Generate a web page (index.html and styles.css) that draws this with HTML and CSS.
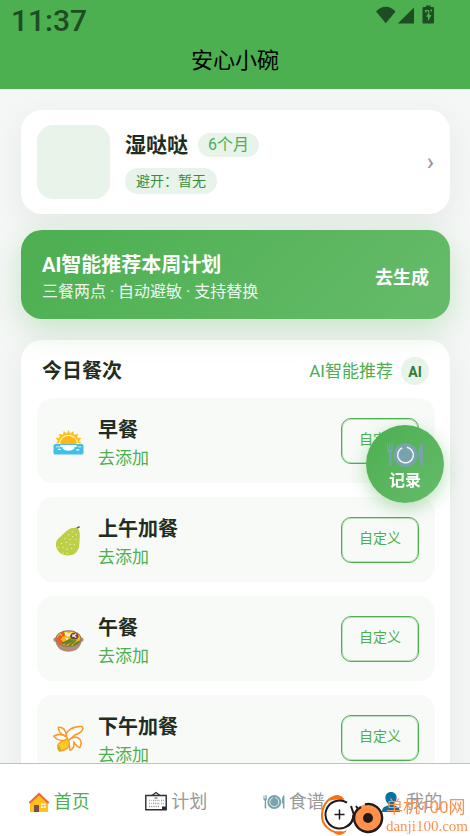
FILE: index.html
```html
<!DOCTYPE html>
<html lang="zh-CN">
<head>
<meta charset="utf-8">
<meta name="viewport" content="width=device-width, initial-scale=1">
<title>安心小碗</title>
<link rel="stylesheet" href="styles.css">
</head>
<body>
<svg class="sprite" aria-hidden="true">
  <symbol id="plate" viewBox="0 0 38 26">
    <g fill="#78a3ad">
      <circle cx="19.500" cy="13" r="12"/>
      <path d="M1 2c0-1 1-1 1 0v5h1V1.500c0-1 1.400-1 1.400 0V7h1V2c0-1 1.400-1 1.300 0v6c0 1.500-.6 2.300-1.400 2.800l.4 12c0 2-3 2-3 0l.4-12C1.300 10.300.8 9.500.8 8z"/>
      <path d="M37 1.500v21.800c0 1.800-2.600 1.800-2.600 0v-7.500h-1.800C32.300 8 33.500 1 37 1.500z"/>
    </g>
    <circle cx="19.500" cy="13" r="7.800" fill="none" stroke="#fff" stroke-width="1.500" stroke-dasharray="44 5" transform="rotate(-80 19.500 13)" opacity=".9"/>
  </symbol>
</svg>
<header class="top">
  <div class="status">
    <span class="clock">11:37</span>
    <svg class="signals" viewBox="0 0 60 20" aria-hidden="true">
      <path d="M0 6.500C5.500.2 14 .2 19.500 6.500L9.800 18.200z"/>
      <path d="M38 2.500v16H21.800z"/>
      <path fill-rule="evenodd" d="M50 2V.6h4.500V2h2.200c.8 0 1.300.5 1.300 1.300v13.900c0 .8-.5 1.300-1.300 1.300h-8.900c-.8 0-1.300-.5-1.300-1.300V3.300c0-.8.5-1.300 1.300-1.300zM49 5v2.500h1.500V6h1.400v2.300h1.200V5zM53.400 6.500l-3.400 5.200h1.900v4.500l3.600-6.100h-2zM54.500 4.500v2h1.600v-2z"/>
    </svg>
  </div>
  <h1 class="app-title">安心小碗</h1>
</header>

<main class="page">
  <a class="card profile" href="#baby">
    <span class="avatar"></span>
    <span class="profile-info">
      <span class="profile-line"><strong class="name">湿哒哒</strong><span class="age">6个月</span></span>
      <span class="avoid">避开：暂无</span>
    </span>
    <span class="chevron">›</span>
  </a>

  <a class="card plan" href="#plan">
    <span class="plan-text">
      <strong class="heading">AI智能推荐本周计划</strong>
      <span class="plan-sub">三餐两点 · 自动避敏 · 支持替换</span>
    </span>
    <strong class="plan-go">去生成</strong>
  </a>

  <section class="card meals">
    <div class="meals-head">
      <h2 class="heading">今日餐次</h2>
      <a class="recommend" href="#ai">AI智能推荐<span class="ai-dot">AI</span></a>
    </div>
    <ul class="meal-list">
      <li class="meal">
        <svg class="meal-icon" viewBox="0 0 32 32" aria-hidden="true">
          <path fill="#fcc21b" d="M16 3l1.800 3.700L21 4.200l.7 3.900 4.100-1.200-.8 4 4.100.4-2.200 3.300 3.100 2.200L3 17l2-2.500-2.200-3.200 4.200-.4-.8-4 4 1.200.8-3.900 3.200 2.500z"/>
          <path d="M6.500 18c1-12.500 18-12.500 19 0" fill="none" stroke="#fff" stroke-width="1"/>
          <path fill="#ffb818" d="M8 18c1-10 15-10 16 0z"/>
          <rect x=".5" y="17.500" width="31" height="11" rx="2" fill="#40c0e7"/>
          <path fill="#fff" d="M8 18.500h16l1 2-3 .5v1.500c-3 2.600-9 2.600-12 0V21l-3-.5zM3 20h4v1H3zM26 20h3v1h-3zM5 22.500h3v1.200H5zM24 23h3v1.200h-3z"/>
        </svg>
        <div class="meal-text"><h3 class="heading">早餐</h3><a class="add" href="#add1">去添加</a></div>
        <button class="custom" type="button">自定义</button>
      </li>
      <li class="meal">
        <svg class="meal-icon" viewBox="0 0 32 32" aria-hidden="true">
          <path d="M24 4c0-2 1.500-2.500 3.500-3.200" fill="none" stroke="#7c5543" stroke-width="1.500"/>
          <path fill="#bdcf46" d="M24 2c4 1 4 7 3.500 12-.4 5 .2 9-3.500 13-4 4.500-13 4.500-17.500 0-5-5-4.500-12 .5-15.500C12 8 16 .5 24 2z"/>
          <path d="M20 6h.1m4 3h.1m-8 0h.1m4 2h.1m-8 2h.1m5 1h.1m6 0h.1m-15 4h.1m5-1h.1m4 2h.1m4 0h.1m-17 3h.1m5 0h.1m4 2h.1m5-1h.1m-9 5h.1m4 0h.1" stroke="#f0f4a8" stroke-width="1.300" stroke-linecap="round"/>
        </svg>
        <div class="meal-text"><h3 class="heading">上午加餐</h3><a class="add" href="#add2">去添加</a></div>
        <button class="custom" type="button">自定义</button>
      </li>
      <li class="meal">
        <svg class="meal-icon" viewBox="0 0 32 32" aria-hidden="true">
          <path fill="#b08b78" d="M3 13c-3-.5-3.500 4-.5 4.300C4 24 9 27.500 16 27.500S28 24 29.500 17.300c3-.3 2.500-4.800-.5-4.300z"/>
          <ellipse cx="16" cy="14" rx="13.300" ry="8.500" fill="#8f6b56"/>
          <ellipse cx="16" cy="14" rx="12.300" ry="7.500" fill="#fbb51d"/>
          <path fill="#f1592a" d="M4 14l3-4 3 2-2 3 3 3-3 2c-2-1-4-3-4-6zM8 8l3-1 2 4-3 1z"/>
          <path fill="#fff6c8" d="M13 7l3 2 4-2-1 4-4 1-3-2zM13 13l3 1-2 2z"/>
          <ellipse cx="22" cy="11.500" rx="4.300" ry="3.500" fill="#704637"/>
          <path d="M20 10l4 3m0-4l-4 3" stroke="#eee" stroke-width="1.300"/>
          <path d="M10 19l8-4m-5 5l7-4m-3 5l6-5m-1 4l5-3" stroke="#60852b" stroke-width="2" stroke-linecap="round"/>
        </svg>
        <div class="meal-text"><h3 class="heading">午餐</h3><a class="add" href="#add3">去添加</a></div>
        <button class="custom" type="button">自定义</button>
      </li>
      <li class="meal">
        <svg class="meal-icon" viewBox="0 0 32 32" aria-hidden="true">
          <g fill="#fff" stroke="#ff9826" stroke-width="1.600" stroke-linejoin="round">
            <path d="M13 14c0-7 7-12 17-11.300 3 4-3 7-7 8.300l-8 7z"/>
            <path d="M14 12C13 6 10 3 5.500 3.500c0 3 1.500 6 5.500 8z"/>
            <path d="M15 14c-5-4-10-4-14.200-1.500 3 4 8 5 13 4.500z"/>
            <path d="M16 17c4-4 8-4 11-2 3 3 2 7 .5 9.500-3-.5-4-3.500-6-6 1 4-1 7.500-4 8.500z"/>
          </g>
          <path fill="#ffca28" stroke="#ff9826" stroke-width="1.300" d="M15 15c-3 3-9 2-10 7-.2 4 0 5 2 6 6-1 10-3 10-8z"/>
          <path fill="#b7bd27" d="M5.500 21l3.500 6-2 1c-1.500-2-2-4-1.500-7z"/>
        </svg>
        <div class="meal-text"><h3 class="heading">下午加餐</h3><a class="add" href="#add4">去添加</a></div>
        <button class="custom" type="button">自定义</button>
      </li>
    </ul>
  </section>
</main>

<button class="fab" type="button">
  <svg class="fab-icon" aria-hidden="true"><use href="#plate"/></svg>
  记录
</button>

<nav class="tabs">
  <a class="tab active" href="#home">
    <svg class="tab-icon" viewBox="0 0 22 22" aria-hidden="true">
      <path fill="#ffc01e" d="M2 11l9-8 9 8v10H2z"/>
      <path d="M2 11.500L11 3l9 8.500" fill="none" stroke="#ef6c3a" stroke-width="2.200" stroke-linecap="round"/>
      <path fill="#795046" d="M6 14h5v7H6z"/><path fill="#fff" d="M13 12.500h4.500V17H13z"/>
      <path d="M15.200 12.500V17M13 14.700h4.500" stroke="#ffc01e"/>
    </svg>首页</a>
  <a class="tab" href="#week">
    <svg class="tab-icon" viewBox="0 0 22 22" aria-hidden="true">
      <path d="M7 4.500L11 1.500l4 3" fill="none" stroke="#2c2c30" stroke-width="1.200"/>
      <path fill="#fff" stroke="#2c2c30" stroke-width="1.400" d="M.8 4.500h20.400v14.300H.8z"/>
      <path d="M4 9.500h3m-3 3h3" stroke="#f4a26c" stroke-width="1.300" stroke-dasharray="1.200 1"/>
      <path d="M4 15.500h11M8 9.500h7m-7 3h7" stroke="#999" stroke-width="1.300" stroke-dasharray="1.200 1"/>
      <path d="M16 9.500h3m-3 3h3" stroke="#6cbbe0" stroke-width="1.300" stroke-dasharray="1.200 1"/>
      <path d="M9.500 7h3" stroke="#444"/><path fill="#2c2c30" d="M17 18.500V15.500h4v3z"/>
    </svg>计划</a>
  <a class="tab" href="#recipes">
    <svg class="tab-icon" aria-hidden="true"><use href="#plate"/></svg>食谱</a>
  <a class="tab" href="#me">
    <svg class="tab-icon" viewBox="0 0 22 22" aria-hidden="true">
      <path fill="#0871a8" d="M11 1c3.500 0 5.800 2.500 5.600 6-.2 3-1.400 5-3 6v1.500c4 .7 6.400 2 6.400 6.500H2c0-4.500 2.400-5.800 6.400-6.500V13c-1.600-1-2.800-3-3-6C5.200 3.500 7.500 1 11 1z"/>
    </svg>我的</a>
</nav>

<aside class="mark">
  <svg class="mark-logo" viewBox="0 0 64 42" aria-hidden="true">
    <path d="M19 2C9 2 3 10 2 20c-1 11 9 20 20 18" fill="none" stroke="#ff6f0e" stroke-width="2"/>
    <path fill="#ff6f0e" d="M8 7c6-7 14-7 16-2l-1 2c-6-3-10-1-15 0zM13 38c5 5 11 3 14-2-4 2-9 3-14 2z"/>
    <circle cx="19.500" cy="20.500" r="14" fill="#fff"/>
    <path d="M27 8.700A14 14 0 1 0 33.500 20.500" fill="none" stroke="#201a1b" stroke-width="2"/>
    <path d="M33.500 21c0 5-2 9-6 11M31 12l3 9M36 12l2 3" fill="none" stroke="#201a1b" stroke-width="2"/>
    <path d="M19.500 15.500v10m-5-5h10" stroke="#201a1b" stroke-width="1.500"/>
    <circle cx="48" cy="24" r="14" fill="#ff914d"/>
    <path d="M45 10.300A14 14 0 1 1 35 19q2-4 6-6" fill="none" stroke="#201a1b" stroke-width="2.400"/>
    <circle cx="48" cy="24" r="5" fill="#201a1b"/>
  </svg>
  <span class="mark-text"><span class="mark-name">单机100网</span><span class="mark-site">danji100.com</span></span>
</aside>
</body>
</html>
```
FILE: styles.css
```css
* { box-sizing: border-box; }

body {
  margin: 0;
  height: 100vh;
  display: flex;
  flex-direction: column;
  overflow: hidden;
  background: #f5f7f6;
  color: #1f2d22;
  font-family: Roboto, "Noto Sans CJK SC", sans-serif;
}

a { color: inherit; text-decoration: none; }
button { font-family: inherit; }
h1, h2, h3, ul { margin: 0; padding: 0; }
.sprite { position: absolute; width: 0; height: 0; }

.top { flex: none; background: #4caf50; padding-bottom: 12px; }
.status {
  display: flex;
  justify-content: space-between;
  align-items: flex-start;
  height: 45px;
  padding: 5px 34px 0 11px;
  color: #1f4c24;
}
.clock { font-size: 30px; line-height: 32px; font-weight: 500; }
.signals { width: 60px; height: 20px; fill: #1f4c24; }
.app-title { color: #000; font-size: 22px; line-height: 32px; font-weight: 400; text-align: center; }

.page {
  flex: 1;
  min-height: 0;
  overflow-y: auto;
  scrollbar-width: none;
  padding: 21px 20px 21px 21px;
}
.card {
  border-radius: 21px;
  background: #fff;
  box-shadow: 0 8px 32px rgba(30, 60, 40, .08);
}
.heading { font-size: 20px; line-height: 28px; font-weight: 700; }

.profile { display: flex; align-items: center; padding: 15px 16px; margin-bottom: 16px; }
.avatar { width: 73px; height: 74px; border-radius: 16px; background: #e8f4e9; }
.profile-info { flex: 1; display: flex; flex-direction: column; align-items: flex-start; gap: 11px; padding: 2px 0 0 15px; }
.profile-line { display: flex; align-items: center; gap: 10px; }
.name { font-size: 21px; line-height: 24px; }
.age { padding: 0 10px; border-radius: 12px; background: #e8f4e9; color: #4caf50; font-size: 16px; line-height: 24px; }
.avoid { padding: 0 11px; border-radius: 13px; background: #e8f4e9; color: #388e3c; font-size: 14px; line-height: 26px; }
.chevron { color: #999; font-size: 24px; line-height: 24px; font-weight: 500; }

.plan {
  position: relative;
  display: flex;
  align-items: center;
  justify-content: space-between;
  padding: 21px 21px 15px;
  margin-bottom: 21px;
  background: linear-gradient(135deg, #4caf50, #66bb6a);
  box-shadow: 0 10px 32px rgba(76, 175, 80, .28);
  color: #fff;
}
.plan-text { display: flex; flex-direction: column; }
.plan-sub { font-size: 16px; line-height: 25px; opacity: .9; }
.plan-go { font-size: 18px; line-height: 28px; }

.meals { padding: 16px 15px 16px 16px; }
.meals-head { display: flex; align-items: center; justify-content: space-between; padding: 1px 6px 0 5px; margin-bottom: 13px; }
.recommend { display: flex; align-items: center; gap: 8px; color: #4caf50; font-size: 17px; line-height: 28px; }
.ai-dot {
  width: 28px;
  height: 28px;
  border-radius: 50%;
  background: #e8f4e9;
  color: #2e7d32;
  font-size: 14px;
  line-height: 31px;
  font-weight: 700;
  text-align: center;
}
.meal-list { display: flex; flex-direction: column; gap: 14px; list-style: none; }
.meal { display: flex; align-items: center; height: 85px; padding: 0 16px; border-radius: 16px; background: #f8faf8; }
.meal-icon { width: 31px; height: 35px; padding-top: 4px; }
.meal-text { flex: 1; padding: 6px 0 0 14px; }
.add { display: block; color: #4caf50; font-size: 17px; line-height: 28px; }
.custom {
  width: 78px;
  height: 46px;
  padding: 0 0 5px;
  border: 1px solid #4caf50;
  border-radius: 10px;
  background: transparent;
  box-shadow: inset 0 0 0 1px rgba(76, 175, 80, .35);
  color: #4caf50;
  font-size: 14px;
}

.fab {
  position: fixed;
  right: 26px;
  bottom: 333px;
  z-index: 2;
  display: flex;
  flex-direction: column;
  align-items: center;
  width: 78px;
  height: 78px;
  padding: 17px 0 0;
  border: 0;
  border-radius: 50%;
  background: linear-gradient(135deg, #4caf50, #66bb6a);
  box-shadow: 0 5px 18px rgba(76, 175, 80, .4);
  color: #fff;
  font-size: 16px;
  line-height: 26px;
  font-weight: 700;
}
.fab-icon { width: 38px; height: 26px; }

.tabs { flex: none; display: flex; height: 73px; padding-top: 3px; border-top: 1px solid #bfc2c0; background: #fff; }
.tab {
  flex: 1;
  display: flex;
  align-items: center;
  justify-content: center;
  gap: 4px;
  color: #999;
  font-size: 18px;
  line-height: 26px;
}
.tab.active { color: #4caf50; }
.tab-icon { width: 22px; height: 22px; }

.mark {
  position: fixed;
  right: 2px;
  bottom: 0;
  z-index: 3;
  display: flex;
  align-items: center;
  gap: 2px;
  color: #ff914d;
}
.mark-logo { width: 64px; height: 42px; }
.mark-text { display: flex; flex-direction: column; }
.mark-name { font-size: 17px; line-height: 22px; }
.mark-site { font-family: "Liberation Serif", serif; font-size: 15px; line-height: 16px; }
```
